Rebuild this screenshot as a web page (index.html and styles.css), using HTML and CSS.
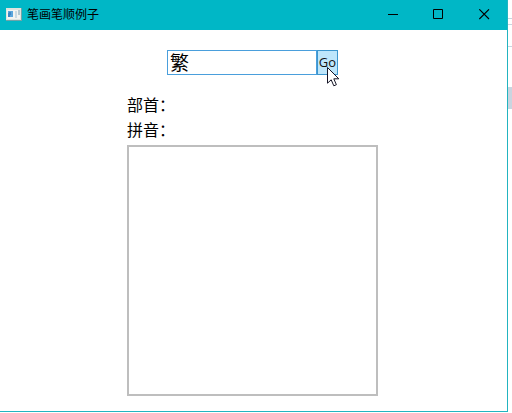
FILE: index.html
```
<!DOCTYPE html>
<html lang="zh-CN">
<head>
<meta charset="utf-8">
<title>笔画笔顺例子</title>
<link rel="stylesheet" href="styles.css">
</head>
<body>
<div class="desktop">
  <main class="window">
    <header class="titlebar">
      <svg class="app-icon" width="16" height="13" viewBox="0 0 16 13" shape-rendering="crispEdges">
        <rect width="16" height="13" fill="#6fa3a8"/>
        <rect width="15" height="12" fill="#dfe4df"/>
        <rect x="1" y="2" width="13" height="9" fill="#f2f4f1"/>
        <rect x="2" y="3" width="5" height="6" fill="#5aa6dc"/>
        <path d="M2 9V5H3V4H5V7H4V9Z" fill="#3f86c4"/>
        <rect x="9" y="3" width="2" height="7" fill="#cbdbe3"/>
        <rect x="12" y="2" width="2" height="5" fill="#b3c9d2"/>
      </svg>
      <h1 class="title">笔画笔顺例子</h1>
      <div class="controls">
        <svg width="11" height="11" viewBox="0 0 11 11"><path d="M0 5.5H10" stroke="#000" fill="none"/></svg>
        <svg width="11" height="11" viewBox="0 0 11 11"><path d="M.5 .5H9.5V9.5H.5Z" stroke="#000" fill="none"/></svg>
        <svg class="close" width="11" height="11" viewBox="0 0 11 11"><path d="M.3 .3L10 10M10 .3L.3 10" stroke="#000" stroke-width="1.1" fill="none"/></svg>
      </div>
    </header>
    <section class="content">
      <form class="search">
        <input class="field" type="text" value="繁" aria-label="汉字">
        <button class="go" type="button">Go
          <svg class="cursor" width="13" height="20" viewBox="0 0 13 20"><path d="M.5 .5V16.2L4.2 12.8L6.8 18.8L9.4 17.7L6.8 11.8H11.8Z" fill="#fff" stroke="#151526"/></svg>
        </button>
      </form>
      <div class="details">
        <p>部首：</p>
        <p>拼音：</p>
      </div>
      <div class="canvas"></div>
    </section>
  </main>
  <aside class="behind">
    <div class="row row-a"></div>
    <div class="row row-b"></div>
    <div class="row row-c"></div>
    <div class="block"></div>
  </aside>
</div>
</body>
</html>
```
FILE: styles.css
```
* {
  box-sizing: border-box;
}

body {
  margin: 0;
  overflow: hidden;
  background: #fff;
  color: #000;
  font-family: "Noto Sans CJK SC", sans-serif;
}

.desktop {
  display: flex;
  width: 512px;
  height: 413px;
}

.window {
  width: 508px;
  height: 412px;
  border: solid #22b4c0;
  border-width: 0 1px 1px 0;
  background: #fff;
}

.titlebar {
  display: flex;
  align-items: center;
  height: 30px;
  padding-left: 6px;
  background: #00b7c6;
}

.app-icon {
  margin-top: -1px;
}

.title {
  margin: 0 0 0 5px;
  font-size: 12px;
  font-weight: 400;
  line-height: 28px;
  height: 30px;
}

.controls {
  display: flex;
  gap: 34px;
  margin: -1px 17px 0 auto;
}

.controls svg {
  display: block;
}

.controls .close {
  margin-left: 1px;
}

.content {
  padding: 20px 0 0 127px;
}

.search {
  display: flex;
  margin-left: 40px;
}

.field {
  width: 150px;
  height: 25px;
  padding: 0 2px 2px;
  border: 1px solid #4a9fdc;
  border-radius: 0;
  outline: none;
  background: #fff;
  color: #000;
  font: 19px/21px "Noto Sans CJK SC", sans-serif;
}

.go {
  position: relative;
  width: 21px;
  height: 25px;
  padding: 0;
  border: 1px solid #3c96ce;
  background: #bee6fb;
  color: #111;
  font: 13px/23px "Open Sans", sans-serif;
}

.cursor {
  position: absolute;
  top: 16px;
  left: 9px;
}

.details {
  height: 50px;
  margin-top: 17px;
}

.details p {
  margin: 0;
  font-size: 16px;
  line-height: 25px;
}

.canvas {
  width: 251px;
  height: 251px;
  margin-top: 3px;
  border: 2px solid #bebebe;
}

.behind {
  width: 4px;
}

.row {
  border-bottom: 1px solid #c9d5e0;
}

.row-a {
  height: 19px;
}

.row-b {
  height: 6px;
}

.row-c {
  height: 22px;
}

.block {
  height: 22px;
  margin-top: 40px;
  background: #c9d5e0;
}
```
